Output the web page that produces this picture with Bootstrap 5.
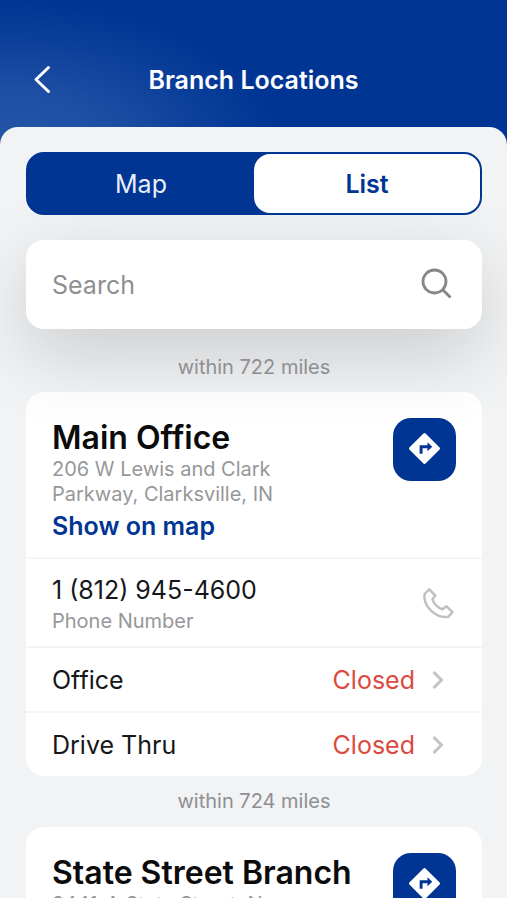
<!DOCTYPE html>
<html lang="en">
<head>
<meta charset="utf-8">
<meta name="viewport" content="width=device-width, initial-scale=1">
<title>Branch Locations</title>
<link href="https://cdn.jsdelivr.net/npm/bootstrap@5.3.0/dist/css/bootstrap.min.css" rel="stylesheet">
<style>
:root { --brand: #003594; --muted-ink: #969799; --line: #f4f5f6; }
body { font-family: Inter, "Liberation Sans", sans-serif; font-size: 25px; line-height: 32px; color: #16171a; background: #fff; }
a { text-decoration: none; }
.app-screen { height: 100vh; border-bottom: 2px solid #fff; background: radial-gradient(ellipse 280px 150px at 0 150px, #2656a9 0%, #1f4fa4 40%, #0c3f9a 75%, #003594 100%) #003594; }
.app-bar { height: 127px; padding: 33px 26px 0; }
.app-title { font-size: 25px; line-height: 32px; }
.back-btn { width: 32px; height: 32px; }
.sheet { border-radius: 18px 18px 0 0; background: #f1f3f5; padding: 25px 25px 0 26px; }
.segmented { background: var(--brand); border: 2px solid var(--brand); border-radius: 18px; height: 63px; z-index: 2; }
.segmented button { color: #e8effb; border-radius: 16px; }
.segmented button.active { color: var(--brand); background: #fff; }
.search-box { height: 89px; margin-top: 25px; padding: 0 29px 0 26px; border-radius: 18px; background: #fff; box-shadow: 0 24px 76px rgba(0, 0, 0, .17); z-index: 1; }
.search-box input { color: #16171a; outline: 0; }
.search-box input::placeholder { color: #8e8f91; opacity: 1; }
.distance { font-size: 20px; line-height: 25px; color: #8e8f93; padding: 13px 0; }
.distance-first { padding-top: 26px; padding-bottom: 12px; z-index: 2; }
.branch { background: #fff; border-radius: 18px; }
.branch-head { padding: 26px 26px 12px; border-bottom: 2px solid var(--line); }
.branch-name { font-size: 32px; line-height: 39px; color: #0b0b0c; }
.minor { font-size: 20px; line-height: 25px; color: var(--muted-ink); }
.map-link { color: var(--brand); line-height: 38px; }
.directions { width: 63px; height: 63px; padding-bottom: 2px; border-radius: 18px; background: var(--brand); }
.branch-row { color: #16171a; padding: 16px 37px 15px 26px; border-bottom: 2px solid var(--line); }
.branch-row:last-child { border-bottom: 0; }
.phone-row { padding: 14px 27px 12px 26px; }
.phone-number { line-height: 34px; margin-bottom: 2px; }
.closed { color: #da4a41; }
</style>
</head>
<body>
<svg class="d-none" aria-hidden="true">
  <symbol id="turn-sign" viewBox="0 0 34 34">
    <path d="M17 2.500 31.500 17 17 31.500 2.500 17Z" fill="#fff" stroke="#fff" stroke-width="3" stroke-linejoin="round"/>
    <path d="M13.500 22.500V15.200H20.500" fill="none" stroke="#003594" stroke-width="3"/>
    <path d="M20 10.500 25 15.200 20 19.900Z" fill="#003594"/>
  </symbol>
  <symbol id="chevron" viewBox="0 0 14 20">
    <path d="M2.500 2 10.500 10 2.500 18" fill="none" stroke="#c3c4c5" stroke-width="3"/>
  </symbol>
</svg>
<div class="app-screen overflow-hidden">
  <header class="app-bar d-flex align-items-center">
    <button type="button" class="back-btn btn p-0 border-0 d-flex" aria-label="Back">
      <svg width="32" height="32" viewBox="0 0 32 32" fill="none" stroke="#fff" stroke-width="3" stroke-linecap="round" stroke-linejoin="round"><path d="M22.500 3.500 10 15.500 22.500 27.500"/></svg>
    </button>
    <h1 class="app-title flex-fill text-center text-white fw-semibold m-0">Branch Locations</h1>
    <span class="back-btn"></span>
  </header>
  <main class="sheet">
    <div class="segmented d-flex position-relative" role="group" aria-label="View">
      <button type="button" class="border-0 bg-transparent w-50">Map</button>
      <button type="button" class="active border-0 w-50 fw-semibold" aria-pressed="true">List</button>
    </div>
    <form class="search-box d-flex align-items-center position-relative">
      <input type="text" class="border-0 bg-transparent p-0 flex-fill w-100" placeholder="Search" aria-label="Search">
      <button type="button" class="btn p-0 border-0 d-flex flex-shrink-0" aria-label="Search">
        <svg width="34" height="34" viewBox="0 0 34 34" fill="none" stroke="#858688" stroke-width="2.800"><circle cx="15.500" cy="13.500" r="11.500"/><path d="m23.500 21.500 8 8"/></svg>
      </button>
    </form>
    <p class="distance distance-first text-center m-0 position-relative">within 722 miles</p>
    <section class="branch">
      <div class="branch-head d-flex justify-content-between">
        <div>
          <h2 class="branch-name fw-semibold m-0">Main Office</h2>
          <address class="minor m-0">206 W Lewis and Clark<br>Parkway, Clarksville, IN</address>
          <a href="#" class="map-link fw-semibold d-block">Show on map</a>
        </div>
        <a href="#" class="directions d-flex align-items-center justify-content-center flex-shrink-0" aria-label="Directions"><svg width="33" height="33"><use href="#turn-sign"/></svg></a>
      </div>
      <a href="tel:18129454600" class="branch-row phone-row d-flex align-items-center justify-content-between">
        <span>
          <span class="phone-number d-block">1 (812) 945-4600</span>
          <span class="minor d-block">Phone Number</span>
        </span>
        <svg width="34" height="34" viewBox="0 0 34 34" fill="none" stroke="#c0c1c2" stroke-width="2.500" stroke-linejoin="round"><path d="M8.200 2.300 14.300 8.500 11.500 12.200C12.500 16.500 17 21 21.500 22.300L25.400 19.200 31.500 25.200 27.200 29.800C15 32 1.500 19 3.600 7Z"/></svg>
      </a>
      <a href="#" class="branch-row d-flex align-items-center">
        <span class="flex-fill">Office</span><span class="closed me-3">Closed</span>
        <svg width="14" height="20"><use href="#chevron"/></svg>
      </a>
      <a href="#" class="branch-row d-flex align-items-center">
        <span class="flex-fill">Drive Thru</span><span class="closed me-3">Closed</span>
        <svg width="14" height="20"><use href="#chevron"/></svg>
      </a>
    </section>
    <p class="distance text-center m-0">within 724 miles</p>
    <section class="branch">
      <div class="branch-head d-flex justify-content-between">
        <div>
          <h2 class="branch-name fw-semibold m-0">State Street Branch</h2>
          <address class="minor m-0">2441-A State Street, New<br>Albany, IN</address>
          <a href="#" class="map-link fw-semibold d-block">Show on map</a>
        </div>
        <a href="#" class="directions d-flex align-items-center justify-content-center flex-shrink-0" aria-label="Directions"><svg width="33" height="33"><use href="#turn-sign"/></svg></a>
      </div>
    </section>
  </main>
</div>
<script src="https://cdn.jsdelivr.net/npm/bootstrap@5.3.0/dist/js/bootstrap.bundle.min.js"></script>
</body>
</html>
